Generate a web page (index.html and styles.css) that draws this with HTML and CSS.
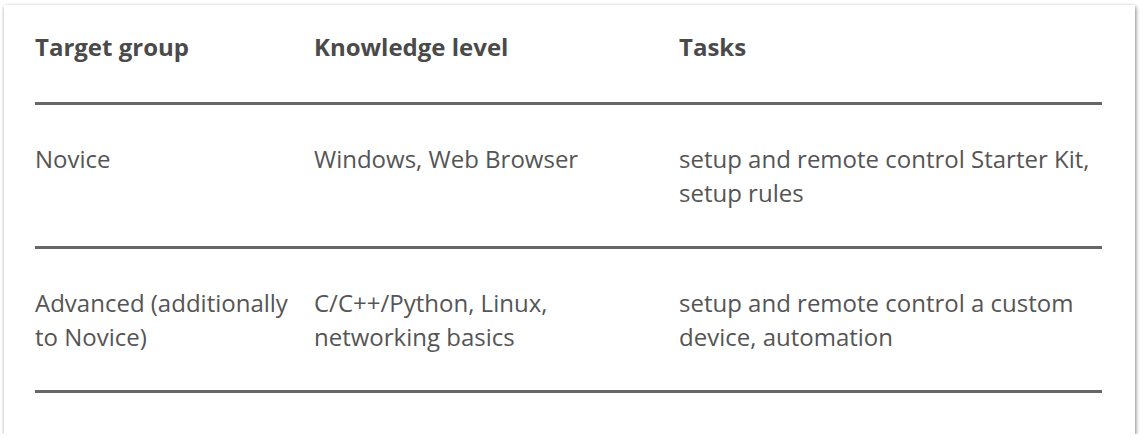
FILE: index.html
```html
<!DOCTYPE html>
<html>
<head>
<meta charset="utf-8">
<link rel="stylesheet" href="styles.css">
</head>
<body>
<div class="card">
  <table class="grid">
    <colgroup>
      <col class="c1">
      <col class="c2">
      <col class="c3">
    </colgroup>
    <thead>
      <tr><th>Target group</th><th>Knowledge level</th><th>Tasks</th></tr>
    </thead>
    <tbody>
      <tr><td>Novice</td><td>Windows, Web Browser</td><td>setup and remote control Starter Kit, setup rules</td></tr>
      <tr><td>Advanced (additionally to Novice)</td><td>C/C++/Python, Linux, networking basics</td><td>setup and remote control a custom device, automation</td></tr>
    </tbody>
  </table>
</div>
</body>
</html>
```
FILE: styles.css
```css
html, body {
  margin: 0;
  padding: 0;
  background: #ffffff;
}
body {
  padding: 5px 0 0 4px;
  font-family: "Open Sans", "Liberation Sans", sans-serif;
}
.card {
  width: 1131px;
  height: 429px;
  box-sizing: border-box;
  background: #fff;
  box-shadow: 1px 2px 4px rgba(0,0,0,0.45), 0 0 3px rgba(0,0,0,0.08);
  padding: 0 0 0 31px;
}
.grid {
  width: 1067px;
  border-collapse: collapse;
  table-layout: fixed;
}
.c1 { width: 279px; }
.c2 { width: 365px; }
.c3 { width: 423px; }
th, td {
  text-align: left;
  vertical-align: top;
  font-size: 24px;
  line-height: 34px;
  color: #555;
  padding: 0 8px 0 0;
  border-bottom: 3px solid #666;
}
th {
  font-weight: 700;
  color: #4a4a4a;
  padding-top: 25px;
  padding-bottom: 38px;
}
td {
  font-weight: 400;
  padding-top: 37px;
  padding-bottom: 36px;
}
```
